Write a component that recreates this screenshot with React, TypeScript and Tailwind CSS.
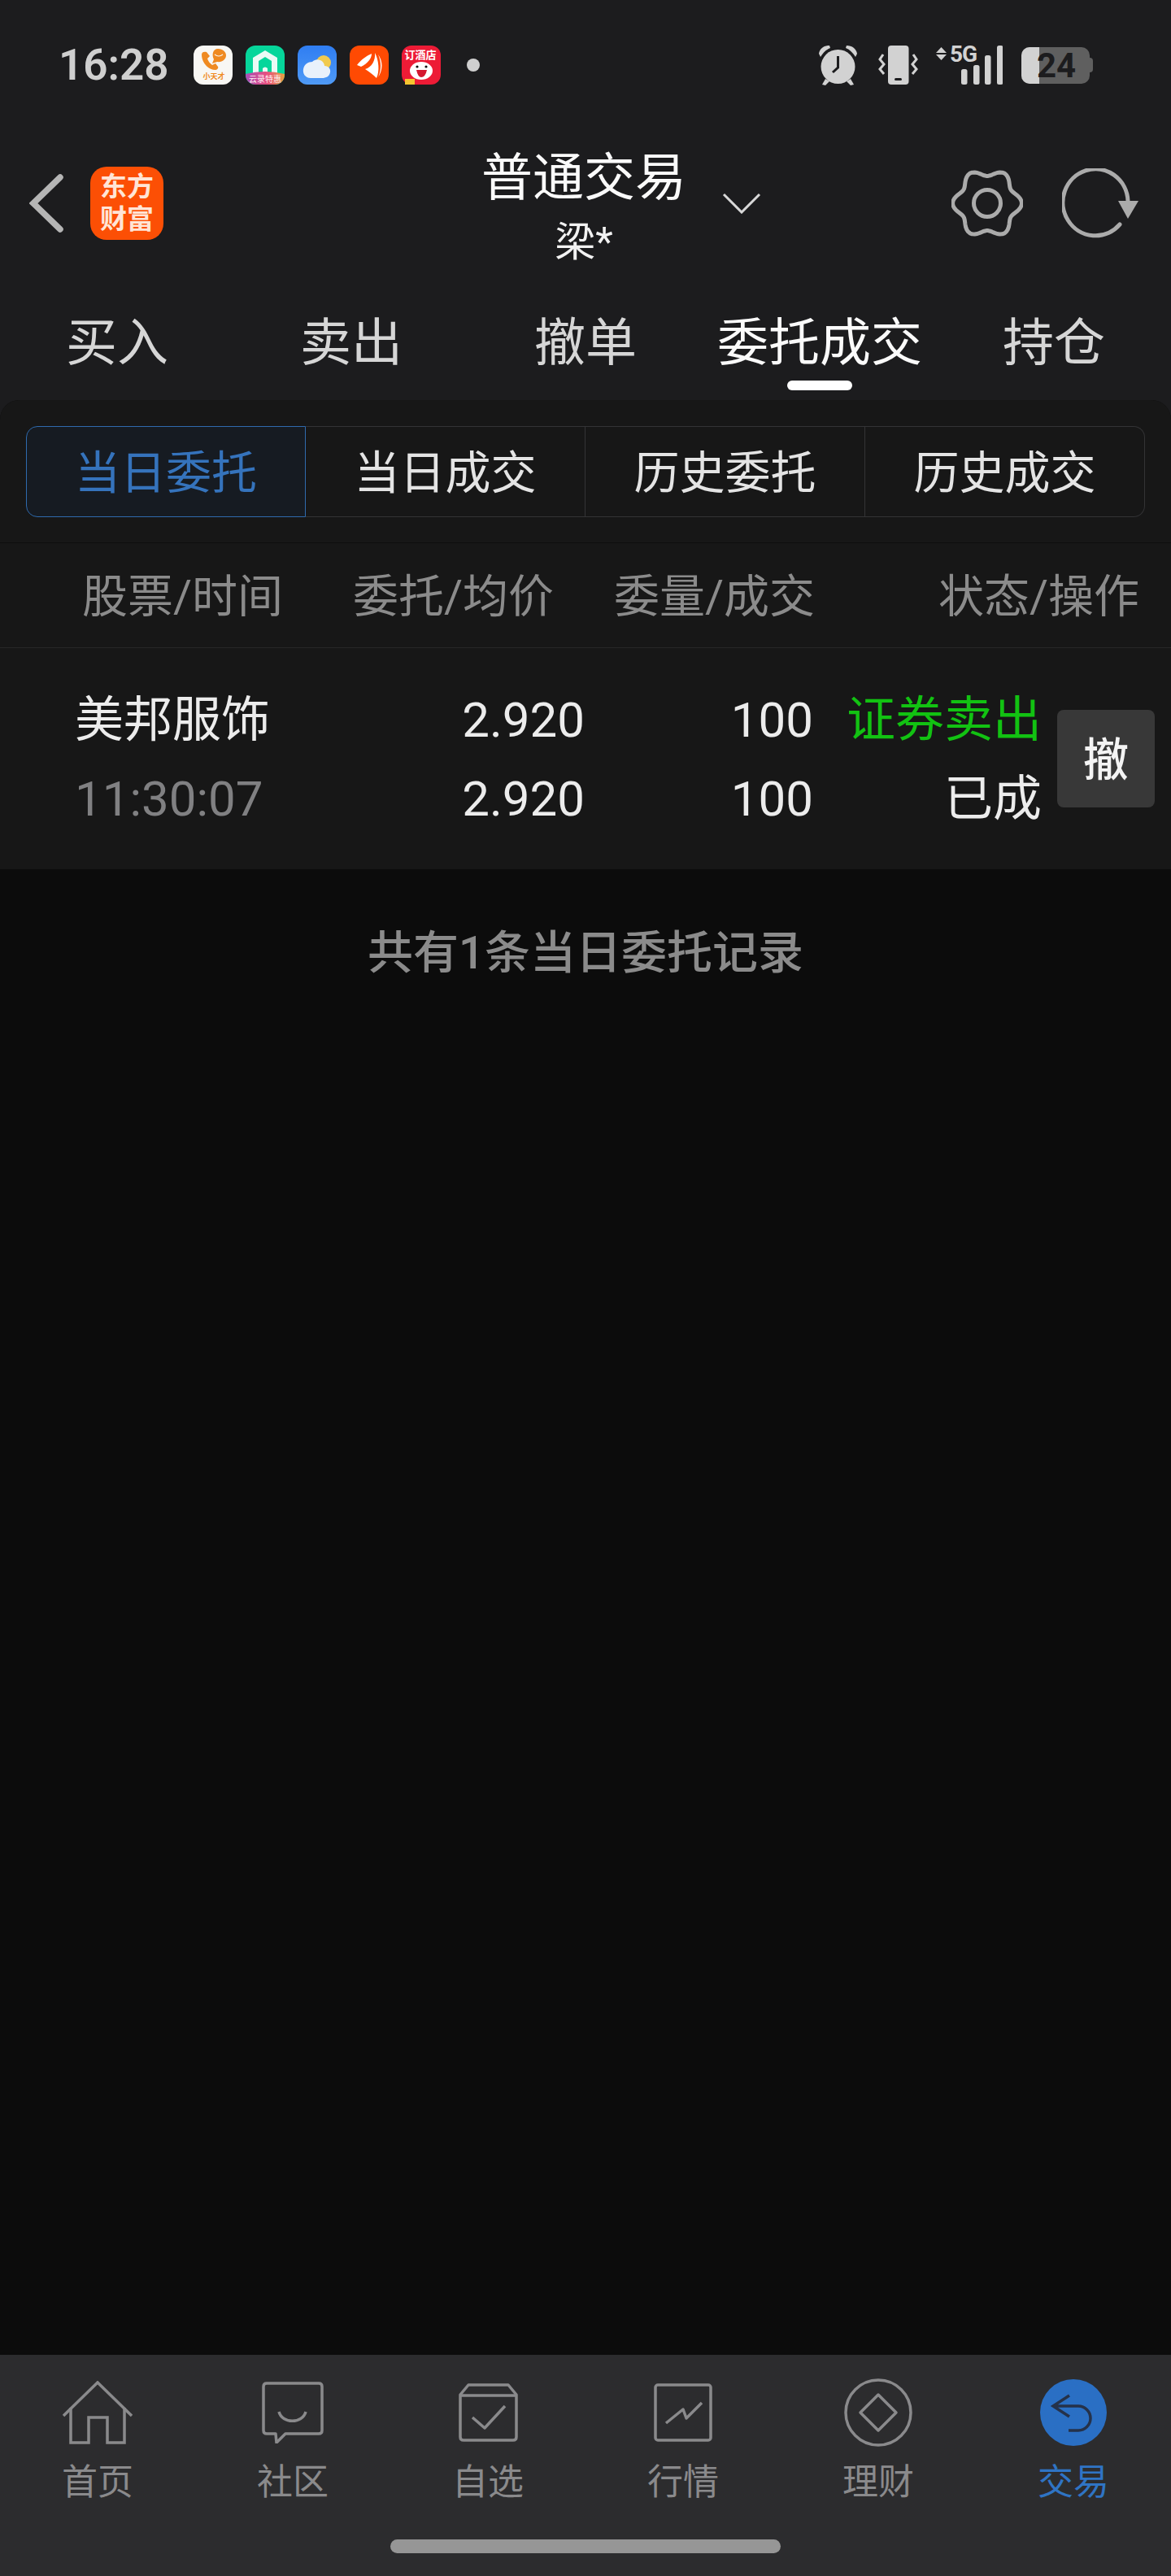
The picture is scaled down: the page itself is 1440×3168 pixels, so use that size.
const FONT = "font-['Roboto','Noto_Sans_CJK_SC',sans-serif]";

// six lobes, same outline as the gear in the nav bar
function gearPath() {
  const pts: string[] = [];
  for (let deg = 0; deg < 360; deg += 4) {
    const a = (deg * Math.PI) / 180;
    const r = 38 + 4.5 * Math.cos(6 * a);
    pts.push(`${(44 + r * Math.cos(a)).toFixed(1)} ${(43 + r * Math.sin(a)).toFixed(1)}`);
  }
  return `M${pts.join(" L")} Z`;
}

function Back() {
  return (
    <svg width="42" height="72" viewBox="0 0 42 72" fill="none" stroke="#b5b5b5" strokeWidth="7.5" strokeLinecap="round">
      <path d="M38 4 L5 36 L38 68" />
    </svg>
  );
}

function Gear() {
  return (
    <svg width="88" height="86" viewBox="0 0 88 86" fill="none" stroke="#ababab" strokeWidth="5" strokeLinejoin="round">
      <path d={gearPath()} />
      <circle cx="44" cy="43" r="16.5" />
    </svg>
  );
}

function Refresh() {
  return (
    <svg width="94" height="86" viewBox="0 0 94 86" fill="none">
      <path d="M71 69 A40 41 0 1 1 81 40" stroke="#ababab" strokeWidth="5" strokeLinecap="round" />
      <path d="M69 40 H94 L81 62 Z" fill="#ababab" />
    </svg>
  );
}

function StatusIcons() {
  return (
    <div className="flex items-center">
      <svg width="50" height="50" viewBox="0 0 50 50" fill="#d2d2d2">
        <circle cx="24.5" cy="27" r="21" />
        <path d="M1 11 C2 5 7 1 14 1 L15 4 C10 6 6 10 3 15 Z" />
        <path d="M48 11 C47 5 42 1 35 1 L34 4 C39 6 43 10 46 15 Z" />
        <path d="M9 42 L5 49 L9 50 L14 45 Z" />
        <path d="M40 42 L44 49 L40 50 L35 45 Z" />
        <path d="M24.5 14 V28 L18 34" fill="none" stroke="#1c1c1e" strokeWidth="3" />
      </svg>
      <svg className="ml-[24px]" width="49" height="48" viewBox="0 0 49 48" fill="none">
        <rect x="12" y="0" width="25.5" height="48" rx="4" fill="#d2d2d2" />
        <rect x="20" y="40" width="9" height="3" rx="1.5" fill="#1c1c1e" />
        <path d="M6 11 L2 17 L7 23 L2 29 L7 35" stroke="#d2d2d2" strokeWidth="3" />
        <path d="M43 11 L47 17 L42 23 L47 29 L42 35" stroke="#d2d2d2" strokeWidth="3" />
      </svg>
      <div className="relative ml-[22px] h-[48px] w-[82px]">
        <svg className="absolute left-0 top-0" width="82" height="48" viewBox="0 0 82 48" fill="#d2d2d2">
          <path d="M6.5 2 L13 9 H0 Z" />
          <path d="M6.5 18 L13 11 H0 Z" />
          <rect x="31" y="29" width="7.5" height="19" rx="2.5" />
          <rect x="46" y="24" width="7.5" height="24" rx="2.5" />
          <rect x="60" y="12" width="7.5" height="36" rx="2.5" />
          <rect x="75" y="0" width="7.5" height="48" rx="2.5" />
        </svg>
        <span className="absolute left-[17px] top-[-3px] font-['Roboto',sans-serif] text-[28px] leading-[28px] font-bold tracking-[-1px] text-[#d2d2d2]">5G</span>
      </div>
      <div className="relative ml-[23px] flex h-[45px] w-[88px] items-center">
        <div className="flex h-[45px] w-[84px] overflow-hidden rounded-[10px] bg-[#5f5f5f]">
          <div className="h-full w-[22px] bg-[#d2d2d2]" />
        </div>
        <div className="h-[18px] w-[4px] rounded-r-sm bg-[#5f5f5f]" />
        <span className="absolute left-[19px] top-[1px] font-['Roboto',sans-serif] text-[42px] leading-[44px] font-bold text-[#1c1c1e]">24</span>
      </div>
    </div>
  );
}

function NoticeIcons() {
  return (
    <div className="flex items-center gap-[16px]">
      <svg width="48" height="48" viewBox="0 0 48 48">
        <rect width="48" height="48" rx="12" fill="#f8f7f4" />
        <path d="M10 11 C10 21 18 30 27 30 C29 30 31 28 30 26 L27 22 L23 24 C20 22 18 19 17 16 L20 13 L16 8 C13 7 10 8 10 11 Z" fill="#ef8a22" />
        <path d="M30 4 C36 4 40 8 40 12 C40 17 35 21 29 20 L23 22 L25 17 C22 11 24 4 30 4 Z" fill="#ef8a22" />
        <path d="M26 11 Q31 15 36 11" stroke="#f8f7f4" strokeWidth="1.2" fill="none" />
        <text x="25" y="41" textAnchor="middle" fontSize="9" fontWeight="700" fill="#ef8a22" fontFamily="Noto Sans CJK SC">小天才</text>
      </svg>
      <svg width="48" height="48" viewBox="0 0 48 48">
        <defs>
          <linearGradient id="cloudBand" x1="0" y1="0" x2="1" y2="0">
            <stop offset="0" stopColor="#a94fb8" />
            <stop offset="0.55" stopColor="#e84f7f" />
            <stop offset="1" stopColor="#e8a23f" />
          </linearGradient>
        </defs>
        <rect width="48" height="48" rx="12" fill="#06d69b" />
        <path d="M9 34 V15 L24 6 L39 15 V34 H32 V19 L24 14 L16 19 V34 Z" fill="#eafaf5" />
        <path d="M21 34 V28 Q24 25 27 28 V34 Z" fill="#eafaf5" />
        <path d="M0 35 Q24 29 48 35 V36 A12 12 0 0 1 36 48 H12 A12 12 0 0 1 0 36 Z" fill="url(#cloudBand)" />
        <text x="24" y="45" textAnchor="middle" fontSize="10" fill="#ffeef3" fontFamily="Noto Sans CJK SC">云录特惠</text>
      </svg>
      <svg width="48" height="48" viewBox="0 0 48 48">
        <defs>
          <linearGradient id="sky" x1="0" y1="0" x2="0" y2="1">
            <stop offset="0" stopColor="#2f7df2" />
            <stop offset="1" stopColor="#4f9af6" />
          </linearGradient>
        </defs>
        <rect width="48" height="48" rx="12" fill="url(#sky)" />
        <circle cx="32" cy="21" r="9" fill="#f1ca4e" />
        <path d="M16 40 C9 40 6 34 7 29 C8 23 13 20 18 20 C24 14 33 19 33 25 C38 25 41 29 40 33 C39 38 35 40 30 40 Z" fill="#e9f1fb" />
      </svg>
      <svg width="48" height="48" viewBox="0 0 48 48">
        <rect width="48" height="48" rx="12" fill="#ff4a03" />
        <path d="M9 24 C14 17 22 12 27 10 C27 16 22 22 14 26 Z" fill="#fff" />
        <path d="M31 9 C32 18 27 27 19 29 C24 32 29 36 33 40 C37 32 36 18 31 9 Z" fill="#fff" />
        <path d="M35 11 C39 20 39 30 35 39 C41 30 41 19 35 11 Z" fill="#fff" />
      </svg>
      <svg width="48" height="48" viewBox="0 0 48 48">
        <rect width="48" height="48" rx="12" fill="#ed1b36" />
        <text x="23" y="16" textAnchor="middle" fontSize="13" fontWeight="700" fill="#fff" fontFamily="Noto Sans CJK SC">订酒店</text>
        <ellipse cx="24" cy="31" rx="14" ry="11" fill="#fff" />
        <circle cx="19" cy="26" r="1.6" fill="#111" />
        <circle cx="30" cy="26" r="1.6" fill="#111" />
        <path d="M18 30 H31 Q29 39 24 39 Q20 39 18 30 Z" fill="#d41830" />
        <rect x="4" y="41" width="12" height="7" fill="#f4c430" />
      </svg>
    </div>
  );
}

function Logo() {
  return (
    <div className="flex h-[90px] w-[90px] flex-col items-center justify-center rounded-[20px] bg-[#fc4f05] text-[33px] leading-[40px] font-semibold text-[#ffe5d6]">
      <span>东方</span>
      <span>财富</span>
    </div>
  );
}

function TabIcon({ name }: { name: string }) {
  const common = { fill: "none", stroke: "#8a8a8c", strokeWidth: 3.5 };
  if (name === "home") {
    return (
      <svg width="86" height="78" viewBox="0 0 86 78" {...common}>
        <path d="M1 43 L43 2 L85 43" />
        <path d="M10 33 V76 H32 V45 H55 V76 H76 V33" />
      </svg>
    );
  }
  if (name === "chat") {
    return (
      <svg width="76" height="76" viewBox="0 0 76 76" {...common} strokeLinejoin="round">
        <path d="M6 2 H70 Q74 2 74 6 V60 Q74 64 70 64 H29 L18 75 L17 64 H6 Q2 64 2 60 V6 Q2 2 6 2 Z" />
        <path d="M21 37 C25 52 50 52 54 37" />
      </svg>
    );
  }
  if (name === "pick") {
    return (
      <svg width="73" height="72" viewBox="0 0 73 72" {...common} strokeLinejoin="round">
        <path d="M2 14 L12 2 H61 L71 14 V66 Q71 70 67 70 H6 Q2 70 2 66 Z" />
        <path d="M2 15 H71" />
        <path d="M17 42 L32 55 L57 28" />
      </svg>
    );
  }
  if (name === "market") {
    return (
      <svg width="72" height="72" viewBox="0 0 72 72" {...common} strokeLinejoin="round">
        <rect x="2" y="2" width="68" height="68" rx="3" />
        <path d="M15 49 L36 32 L40 43 L59 24" />
      </svg>
    );
  }
  if (name === "finance") {
    return (
      <svg width="84" height="84" viewBox="0 0 84 84" {...common}>
        <circle cx="42" cy="42" r="40" />
        <path d="M42 20 L64 42 L42 64 L20 42 Z" strokeLinejoin="round" />
      </svg>
    );
  }
  return (
    <svg width="82" height="82" viewBox="0 0 82 82">
      <circle cx="41" cy="41" r="41" fill="#2a6fc4" />
      <path d="M36 20 L16 33 L36 46 M16 33 H47 A15 15 0 0 1 47 63 H35" fill="none" stroke="#25324a" strokeWidth="3.5" />
    </svg>
  );
}

const tabs = [
  { name: "home", label: "首页" },
  { name: "chat", label: "社区" },
  { name: "pick", label: "自选" },
  { name: "market", label: "行情" },
  { name: "finance", label: "理财" },
  { name: "trade", label: "交易" },
];

const segs = ["当日委托", "当日成交", "历史委托", "历史成交"];

const navTabs = ["买入", "卖出", "撤单", "委托成交", "持仓"];

export default function App() {
  return (
    <div className={`${FONT} flex h-[3168px] w-[1440px] flex-col overflow-hidden bg-[#1c1c1e]`}>
      {/* Header */}
      <div className="h-[492px] shrink-0">
        <div className="flex h-[160px] items-center pl-[72px] pr-[96px]">
          <span className="w-[132px] font-['Roboto',sans-serif] text-[53px] leading-none font-semibold text-[#cfcfcf]">16:28</span>
          <div className="ml-[34px]"><NoticeIcons /></div>
          <span className="ml-[32px] h-[16px] w-[16px] rounded-full bg-[#cfcfcf]" />
          <div className="ml-auto"><StatusIcons /></div>
        </div>
        <div className="flex h-[180px] items-center pl-[36px] pr-[40px]">
          <Back />
          <div className="ml-[33px]"><Logo /></div>
          <div className="ml-[394px] flex w-[246px] flex-col items-center gap-[17px] pt-[6px]">
            <span className="text-[63px] leading-[72px] whitespace-nowrap text-[#fafafa]">普通交易</span>
            <span className="text-[50px] leading-[52px] text-[#f2f2f2]">梁*</span>
          </div>
          <svg className="ml-[47px]" width="48" height="26" viewBox="0 0 48 26" fill="none" stroke="#d8d8d8" strokeWidth="3">
            <path d="M2 2 L24 24 L46 2" />
          </svg>
          <div className="ml-auto flex items-center gap-[48px]">
            <Gear />
            <Refresh />
          </div>
        </div>
        <div className="grid h-[152px] grid-cols-5 pt-[46px]">
          {navTabs.map((t) => (
            <div key={t} className="flex flex-col items-center">
              <span className={t === "委托成交" ? "text-[63px] leading-[72px] whitespace-nowrap text-[#fafafa]" : "text-[63px] leading-[72px] text-[#d6d6d6]"}>{t}</span>
              {t === "委托成交" && <span className="mt-[10px] h-[12px] w-[80px] rounded-full bg-white" />}
            </div>
          ))}
        </div>
      </div>

      {/* Main */}
      <div className="flex flex-1 flex-col overflow-hidden rounded-t-[24px] bg-[#0c0c0c]">
        <div className="h-[175px] bg-[#171717] px-[32px] pt-[32px]">
          <div className="flex h-[112px]">
            {segs.map((s, i) => (
              <div
                key={s}
                className={
                  i === 0
                    ? "flex w-[344px] items-center justify-center rounded-l-[14px] border border-[#2f6aad] bg-[#161b22] pt-[4px] text-[56px] text-[#3573bc]"
                    : i === 3
                      ? "flex w-[344px] items-center justify-center rounded-r-[14px] border-y border-r border-[#333335] pt-[4px] text-[56px] text-[#e4e4e4]"
                      : "flex w-[344px] items-center justify-center border-y border-r border-[#333335] pt-[4px] text-[56px] text-[#e4e4e4]"
                }
              >
                {s}
              </div>
            ))}
          </div>
        </div>
        <div className="flex h-[130px] items-center border-y border-y-[#0e0e0e] border-b-[#262626] bg-[#171717] pl-[101px] pt-[4px] text-[56px] text-[#8b8b8b]">
          <span className="w-[333px]">股票/时间</span>
          <span className="w-[321px]">委托/均价</span>
          <span className="w-[399px]">委量/成交</span>
          <span>状态/操作</span>
        </div>
        <div className="flex h-[272px] items-center bg-[#171717] text-[60px] leading-[68px]">
          <div className="ml-[92px] flex w-[290px] flex-col gap-[29px] pt-[3px]">
            <span className="text-[#ececec]">美邦服饰</span>
            <span className="font-['Roboto',sans-serif] text-[#808082]">11:30:07</span>
          </div>
          <div className="flex w-[337px] flex-col items-end gap-[29px] pt-[3px] font-['Roboto',sans-serif] text-[#ececec]">
            <span>2.920</span>
            <span>2.920</span>
          </div>
          <div className="flex w-[281px] flex-col items-end gap-[29px] pt-[3px] font-['Roboto',sans-serif] text-[#ececec]">
            <span>100</span>
            <span>100</span>
          </div>
          <div className="flex w-[281px] flex-col items-end gap-[29px] pt-[3px]">
            <span className="whitespace-nowrap text-[#12c212]">证券卖出</span>
            <span className="text-[#ececec]">已成</span>
          </div>
          <div className="ml-[19px] flex h-[120px] w-[120px] items-center justify-center rounded-[8px] bg-[#383838] pt-[3px] text-[56px] font-medium text-[#f4f4f4]">撤</div>
        </div>
        <div className="pt-[71px] text-center text-[56px] leading-[64px] font-medium text-[#8b8b8b]">共有1条当日委托记录</div>
      </div>

      {/* Bottom tab bar */}
      <div className="h-[272px] shrink-0 bg-[#2c2c2e]">
        <div className="grid grid-cols-6 pt-[26px]">
          {tabs.map((tab) => (
            <div key={tab.name} className="flex flex-col items-center">
              <div className="flex h-[90px] items-center justify-center"><TabIcon name={tab.name} /></div>
              <span className={tab.name === "trade" ? "mt-[16px] text-[44px] leading-[50px] text-[#2f74c4]" : "mt-[16px] text-[44px] leading-[50px] text-[#8a8a8c]"}>{tab.label}</span>
            </div>
          ))}
        </div>
        <div className="mx-auto mt-[45px] h-[17px] w-[480px] rounded-full bg-[#969696]" />
      </div>
    </div>
  );
}
